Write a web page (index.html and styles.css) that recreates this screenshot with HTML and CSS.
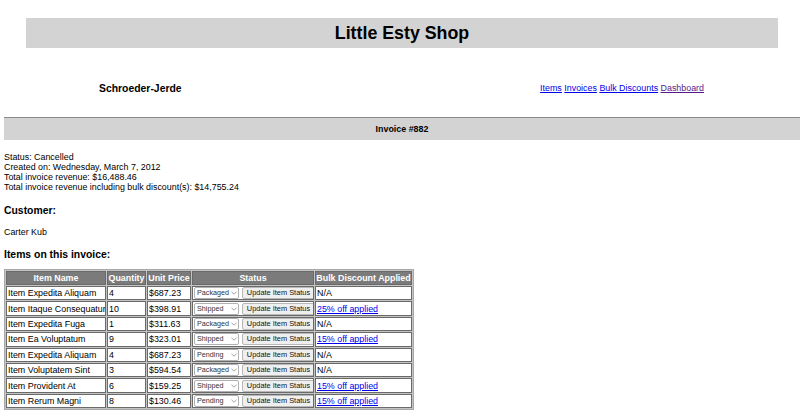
FILE: index.html
```html
<!DOCTYPE html>
<html>
<head>
<meta charset="utf-8">
<title>Little Esty Shop</title>
<link rel="stylesheet" href="styles.css">
</head>
<body>
<header class="site-header">
  <h1 class="site-title">Little Esty Shop</h1>
</header>
<div class="merchant-row">
  <h3 class="merchant-name">Schroeder-Jerde</h3>
  <nav class="nav">
    <a href="#items">Items</a>
    <a href="#invoices">Invoices</a>
    <a href="#discounts">Bulk Discounts</a>
    <a href="#dashboard" class="visited">Dashboard</a>
  </nav>
</div>
<div class="invoice-bar">Invoice #882</div>
<section class="details">
  <p class="line">Status: Cancelled</p>
  <p class="line">Created on: Wednesday, March 7, 2012</p>
  <p class="line">Total invoice revenue: $16,488.46</p>
  <p class="line">Total invoice revenue including bulk discount(s): $14,755.24</p>
</section>
<h3 class="section-title customer-title">Customer:</h3>
<p class="customer">Carter Kub</p>
<h3 class="section-title items-title">Items on this invoice:</h3>
<table class="items">
  <colgroup>
    <col class="c-name"><col class="c-qty"><col class="c-price"><col class="c-status"><col class="c-disc">
  </colgroup>
  <thead>
    <tr><th>Item Name</th><th>Quantity</th><th>Unit Price</th><th>Status</th><th>Bulk Discount Applied</th></tr>
  </thead>
  <tbody>
    <tr><td>Item Expedita Aliquam</td><td>4</td><td>$687.23</td><td class="status"><span class="sel"><select><option>Pending</option><option selected>Packaged</option><option>Shipped</option></select><svg class="chev" viewBox="0 0 6 4" width="6" height="4"><path d="M0.5 0.8 L3 3.2 L5.5 0.8" fill="none" stroke="#8a8a8a" stroke-width="0.8"/></svg></span><button>Update Item Status</button></td><td>N/A</td></tr>
    <tr><td>Item Itaque Consequatur</td><td>10</td><td>$398.91</td><td class="status"><span class="sel"><select><option>Pending</option><option>Packaged</option><option selected>Shipped</option></select><svg class="chev" viewBox="0 0 6 4" width="6" height="4"><path d="M0.5 0.8 L3 3.2 L5.5 0.8" fill="none" stroke="#8a8a8a" stroke-width="0.8"/></svg></span><button>Update Item Status</button></td><td><a href="#d1">25% off applied</a></td></tr>
    <tr><td>Item Expedita Fuga</td><td>1</td><td>$311.63</td><td class="status"><span class="sel"><select><option>Pending</option><option selected>Packaged</option><option>Shipped</option></select><svg class="chev" viewBox="0 0 6 4" width="6" height="4"><path d="M0.5 0.8 L3 3.2 L5.5 0.8" fill="none" stroke="#8a8a8a" stroke-width="0.8"/></svg></span><button>Update Item Status</button></td><td>N/A</td></tr>
    <tr><td>Item Ea Voluptatum</td><td>9</td><td>$323.01</td><td class="status"><span class="sel"><select><option>Pending</option><option>Packaged</option><option selected>Shipped</option></select><svg class="chev" viewBox="0 0 6 4" width="6" height="4"><path d="M0.5 0.8 L3 3.2 L5.5 0.8" fill="none" stroke="#8a8a8a" stroke-width="0.8"/></svg></span><button>Update Item Status</button></td><td><a href="#d2">15% off applied</a></td></tr>
    <tr><td>Item Expedita Aliquam</td><td>4</td><td>$687.23</td><td class="status"><span class="sel"><select><option selected>Pending</option><option>Packaged</option><option>Shipped</option></select><svg class="chev" viewBox="0 0 6 4" width="6" height="4"><path d="M0.5 0.8 L3 3.2 L5.5 0.8" fill="none" stroke="#8a8a8a" stroke-width="0.8"/></svg></span><button>Update Item Status</button></td><td>N/A</td></tr>
    <tr><td>Item Voluptatem Sint</td><td>3</td><td>$594.54</td><td class="status"><span class="sel"><select><option>Pending</option><option selected>Packaged</option><option>Shipped</option></select><svg class="chev" viewBox="0 0 6 4" width="6" height="4"><path d="M0.5 0.8 L3 3.2 L5.5 0.8" fill="none" stroke="#8a8a8a" stroke-width="0.8"/></svg></span><button>Update Item Status</button></td><td>N/A</td></tr>
    <tr><td>Item Provident At</td><td>6</td><td>$159.25</td><td class="status"><span class="sel"><select><option>Pending</option><option>Packaged</option><option selected>Shipped</option></select><svg class="chev" viewBox="0 0 6 4" width="6" height="4"><path d="M0.5 0.8 L3 3.2 L5.5 0.8" fill="none" stroke="#8a8a8a" stroke-width="0.8"/></svg></span><button>Update Item Status</button></td><td><a href="#d2">15% off applied</a></td></tr>
    <tr><td>Item Rerum Magni</td><td>8</td><td>$130.46</td><td class="status"><span class="sel"><select><option selected>Pending</option><option>Packaged</option><option>Shipped</option></select><svg class="chev" viewBox="0 0 6 4" width="6" height="4"><path d="M0.5 0.8 L3 3.2 L5.5 0.8" fill="none" stroke="#8a8a8a" stroke-width="0.8"/></svg></span><button>Update Item Status</button></td><td><a href="#d2">15% off applied</a></td></tr>
  </tbody>
</table>
</body>
</html>
```
FILE: styles.css
```css
html, body {
  margin: 0;
  padding: 0;
  background: #ffffff;
}
body {
  padding: 0 4px;
  font-family: "Liberation Sans", Arial, Helvetica, sans-serif;
  font-size: 8.9px;
  line-height: 10px;
  color: #000;
  overflow: hidden;
}
a { color: #0000ee; text-decoration: underline; }
a.visited { color: #551a8b; }

.site-header {
  margin: 18px 0 0 22px;
  width: 752px;
  height: 30px;
  background: #d3d3d3;
  display: flex;
  align-items: center;
  justify-content: center;
}
.site-title {
  margin: 0;
  font-size: 17.8px;
  line-height: 20px;
  font-weight: bold;
}

.merchant-row {
  margin-top: 30px;
  height: 22px;
  display: flex;
  align-items: center;
  justify-content: space-between;
  padding: 0 92px 0 95px;
}
.merchant-name {
  margin: 0;
  font-size: 10.4px;
  line-height: 12px;
  font-weight: bold;
}
.nav {
  display: flex;
  gap: 2.5px;
  margin-top: -2px;
}

.invoice-bar {
  margin-top: 17px;
  margin-right: -4px;
  border-top: 1px solid #8a8a8a;
  height: 22px;
  background: #d3d3d3;
  font-weight: bold;
  text-align: center;
  line-height: 22px;
}

.details { margin-top: 12px; }
.line { margin: 0; }

.section-title {
  margin: 0;
  font-size: 10.4px;
  line-height: 12px;
  font-weight: bold;
}
.customer-title { margin-top: 13px; }
.customer { margin: 10px 0 0; }
.items-title { margin-top: 12px; }

.items {
  margin-top: 8px;
  table-layout: fixed;
  width: 410px;
  border: 1px solid #a8a8a8;
  border-spacing: 1px;
  background: #c4c4c4;
}
.c-name { width: 100px; }
.c-qty { width: 39px; }
.c-price { width: 44px; }
.c-status { width: 122px; }
.c-disc { width: 97px; }

.items th, .items td {
  border: 1px solid #6a6a6a;
  padding: 0 1px;
  white-space: nowrap;
  overflow: hidden;
  text-align: left;
}
.items th {
  background: #7b7b7b;
  color: #fff;
  font-weight: bold;
  text-align: center;
  height: 12px;
  line-height: 12px;
  padding: 0;
}
.items td {
  background: #fff;
  height: 12.4px;
  line-height: 12px;
}
.items td.status {
  padding: 0 0 0 1px;
  font-size: 0;
  line-height: 0;
}
.sel {
  position: relative;
  display: inline-block;
  vertical-align: middle;
  margin-right: 3px;
}
.sel select {
  -webkit-appearance: none;
  appearance: none;
  display: block;
  font-family: "Liberation Sans", Arial, sans-serif;
  font-size: 7.2px;
  line-height: 10px;
  height: 12px;
  width: 45px;
  padding: 0 0 0 2px;
  margin: 0;
  border: 1px solid #b0b0b0;
  border-radius: 2px;
  background: #fff;
  color: #333;
}
.chev {
  position: absolute;
  right: 2px;
  top: 4px;
  pointer-events: none;
}
.status button {
  font-family: "Liberation Sans", Arial, sans-serif;
  font-size: 7.4px;
  line-height: 10px;
  height: 12px;
  width: 73px;
  padding: 0;
  border: 1px solid #b8b8b8;
  border-radius: 2px;
  background: #efefef;
  color: #111;
  vertical-align: middle;
}
```
